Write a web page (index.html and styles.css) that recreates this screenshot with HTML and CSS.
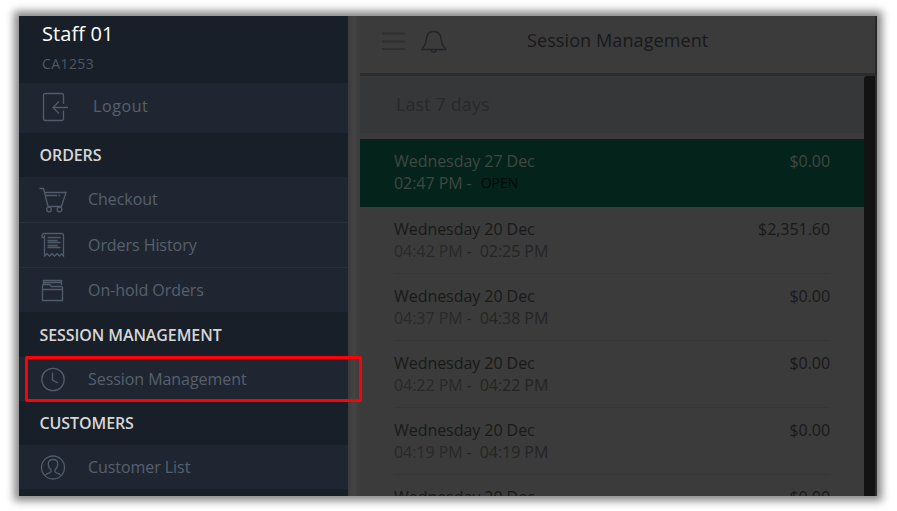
FILE: index.html
```html
<!DOCTYPE html>
<html lang="en">
<head>
<meta charset="utf-8">
<title>Session Management</title>
<link rel="stylesheet" href="styles.css">
</head>
<body>
<div class="window">
  <aside class="sidebar">
    <div class="user"><div class="user-name">Staff 01</div><div class="user-id">CA1253</div></div>
    <div class="item logout">
      <svg class="icon" width="28" height="32" viewBox="0 0 28 32"><path d="M22.500 14V5.500Q22.500 3.500 20.500 3.500H4.500Q2.500 3.500 2.500 5.500V28.500Q2.500 30.500 4.500 30.500H20.500Q22.500 30.500 22.500 28.500V20.500M27 17.500H12M18 11.500L12 17.500L18 23.500"/></svg>
      <span>Logout</span>
    </div>
    <h2 class="group">ORDERS</h2>
    <div class="item">
      <svg class="icon" width="28" height="28" viewBox="0 0 28 28"><path d="M.5 3.500H4.500L9 21.500H22.500L27 7.500H5.500M6 10.500H18M19.500 10.500H21M8.500 21.500H23"/><circle cx="10" cy="24.500" r="2.300"/><circle cx="20.500" cy="24.500" r="2.300"/></svg>
      <span>Checkout</span>
    </div>
    <div class="item line">
      <svg class="icon" width="28" height="28" viewBox="0 0 28 28"><path d="M5.500 6V25L8 22.700L10.500 25L13 22.700L15.500 25L18 22.700L20.500 25L22.500 23L24.500 25V4.500Q24.500 2.500 22.500 2.500H5Q3.200 2.500 3.200 4.500V6.500H5.500M5.500 6.500V4M8.500 6.500H21.500M8.500 9.500H18.500M8.500 11.500H21.500M8.500 14.500H18.500M8.500 16.500H21.500"/></svg>
      <span>Orders History</span>
    </div>
    <div class="item line">
      <svg class="icon" width="28" height="28" viewBox="0 0 28 28"><path d="M4.500 9V4.500H22.500V9M3.500 14.500V9.500Q3.500 8.500 4.500 8.500H10.500L12.500 10.500H22.500Q23.500 10.500 23.500 11.500V14.500M3.500 13.500H23.500V24.500H3.500ZM4.500 6.500H22"/></svg>
      <span>On-hold Orders</span>
    </div>
    <h2 class="group">SESSION MANAGEMENT</h2>
    <div class="item current">
      <svg class="icon" width="28" height="28" viewBox="0 0 28 28"><circle cx="14" cy="14.500" r="11.200"/><path d="M13.500 7.500V15L19 18"/></svg>
      <span>Session Management</span>
    </div>
    <h2 class="group">CUSTOMERS</h2>
    <div class="item last">
      <svg class="icon" width="28" height="28" viewBox="0 0 28 28"><circle cx="14" cy="14.500" r="11.500"/><path d="M6 22.500Q7 21 11 19.700Q12.500 19 12 17Q9.500 15 9.300 11.300Q9 6.500 14 6.500Q19 6.500 18.700 11.300Q18.500 15 16 17Q15.500 19 17 19.700Q21 21 22 22.500"/></svg>
      <span>Customer List</span>
    </div>
  </aside>
  <div class="gutter"></div>
  <main class="main">
    <header class="topbar">
      <svg class="menu" width="24" height="20" viewBox="0 0 24 20"><path d="M0 2.500H23M0 10.500H23M0 18H23"/></svg>
      <svg class="bell" width="26" height="24" viewBox="0 0 26 24"><path d="M1 19.500Q1 18.500 3 16.500C5.500 13 5 10 6 6Q7.500 1.500 12.500 1.500Q17.500 1.500 19.500 6C20.500 10 20 13 22.500 16.500Q25 18.500 25 19.500ZM10 20.500Q13 24 15.500 20.500"/></svg>
      <h1>Session Management</h1>
    </header>
    <div class="body">
      <div class="list">
        <div class="range">Last 7 days</div>
        <div class="row open"><div><div class="day">Wednesday 27 Dec</div><div class="time"><span class="from">02:47 PM</span><span class="dash">-</span><span class="state">OPEN</span></div></div><div class="total">$0.00</div></div>
        <div class="row"><div><div class="day">Wednesday 20 Dec</div><div class="time"><span class="from">04:42 PM</span><span class="dash">-</span><span>02:25 PM</span></div></div><div class="total">$2,351.60</div></div>
        <div class="row"><div><div class="day">Wednesday 20 Dec</div><div class="time"><span class="from">04:37 PM</span><span class="dash">-</span><span>04:38 PM</span></div></div><div class="total">$0.00</div></div>
        <div class="row"><div><div class="day">Wednesday 20 Dec</div><div class="time"><span class="from">04:22 PM</span><span class="dash">-</span><span>04:22 PM</span></div></div><div class="total">$0.00</div></div>
        <div class="row"><div><div class="day">Wednesday 20 Dec</div><div class="time"><span class="from">04:19 PM</span><span class="dash">-</span><span>04:19 PM</span></div></div><div class="total">$0.00</div></div>
        <div class="row"><div><div class="day">Wednesday 20 Dec</div></div><div class="total">$0.00</div></div>
      </div>
      <div class="scrollbar"></div>
    </div>
  </main>
</div>
</body>
</html>
```
FILE: styles.css
```css
*, *::after { box-sizing: border-box; }
body { margin: 0; padding: 16px 0 0 19px; height: 511px; overflow: hidden; background: #fff; font-family: "Open Sans", "Noto Sans", sans-serif; font-size: 16px; }
h1, h2 { margin: 0; }
svg { fill: none; display: block; flex: none; }
.window { display: flex; width: 858px; height: 479.500px; box-shadow: 0 0 8px 5px rgba(0, 0, 0, .46); background: #3b3b3b; }

.sidebar { width: 329px; background: #181f28; color: #56606d; }
.user { height: 67px; padding: 3px 0 0 23px; }
.user-name { font-size: 20px; line-height: 30px; color: #fff; letter-spacing: .1px; }
.user-id { font-size: 14px; line-height: 20px; margin-top: 5px; color: #4f5765; letter-spacing: .4px; }
.item { display: flex; align-items: center; height: 45px; padding: 0 0 1px 20px; gap: 21px; background: #202631; letter-spacing: -.06px; }
.item.line { border-top: 1px solid #29303b; padding-bottom: 0; }
.item.logout { height: 50px; padding: 0 0 4px 22px; gap: 24px; letter-spacing: .6px; }
.icon { stroke: #505c69; stroke-width: 1.3; }
.group { height: 44px; line-height: 45px; padding-left: 20.500px; font-size: 16px; font-weight: 600; color: #d6d6d6; letter-spacing: -.09px; }
.line + .group { height: 45px; line-height: 46px; }
.item.current { position: relative; height: 44px; padding-bottom: 1px; }
.item.last { height: 44px; padding-bottom: 0; }
.item.current::after { content: ""; position: absolute; left: 6px; top: -1px; width: 337px; height: 46px; border: 3px solid #fd0008; border-radius: 2px; z-index: 1; }

.gutter { width: 12px; background: linear-gradient(90deg, #3c3b3b, #454444 50%, #3b3b3b); }
.main { flex: 1; min-width: 0; display: flex; flex-direction: column; }
.topbar { display: flex; height: 60px; padding: 14px 0 0 22px; background: #3b3b3b; border-bottom: 3px solid #2b2b2c; border-right: 2px solid #282828; }
.menu { margin-top: 1px; stroke: #303031; stroke-width: 2; }
.bell { margin-left: 15px; stroke: #232428; stroke-width: 1.3; }
.topbar h1 { margin-left: 80px; font-size: 18px; font-weight: 400; line-height: 20px; color: #19191b; white-space: nowrap; letter-spacing: .1px; }
.body { flex: 1; min-height: 0; display: flex; }
.list { flex: 1; min-width: 0; overflow: hidden; }
.range { height: 63px; padding-left: 36px; line-height: 57px; font-size: 18px; color: #27292b; background: #363738; border-bottom: 6px solid #3d3b3b; letter-spacing: .1px; }
.row { display: flex; justify-content: space-between; height: 67px; margin: 0 34px; padding: 11px 0 0; border-bottom: 1px solid #363636; color: #191919; line-height: 22px; letter-spacing: -.05px; }
.row.open { height: 68px; margin: 0; padding: 11px 34px 0; background: #04241b; border: 0; color: #3f4743; }
.time { display: flex; color: #242425; }
.from { color: #292929; }
.dash { margin: 0 8px 0 4px; }
.open .time, .open .from { color: #404643; }
.open .state { color: #020805; font-size: 14px; margin-left: 1px; }
.scrollbar { width: 13px; background: #131313; border-right: 2px solid #2c2c2c; border-radius: 3px 0 0; }
```
